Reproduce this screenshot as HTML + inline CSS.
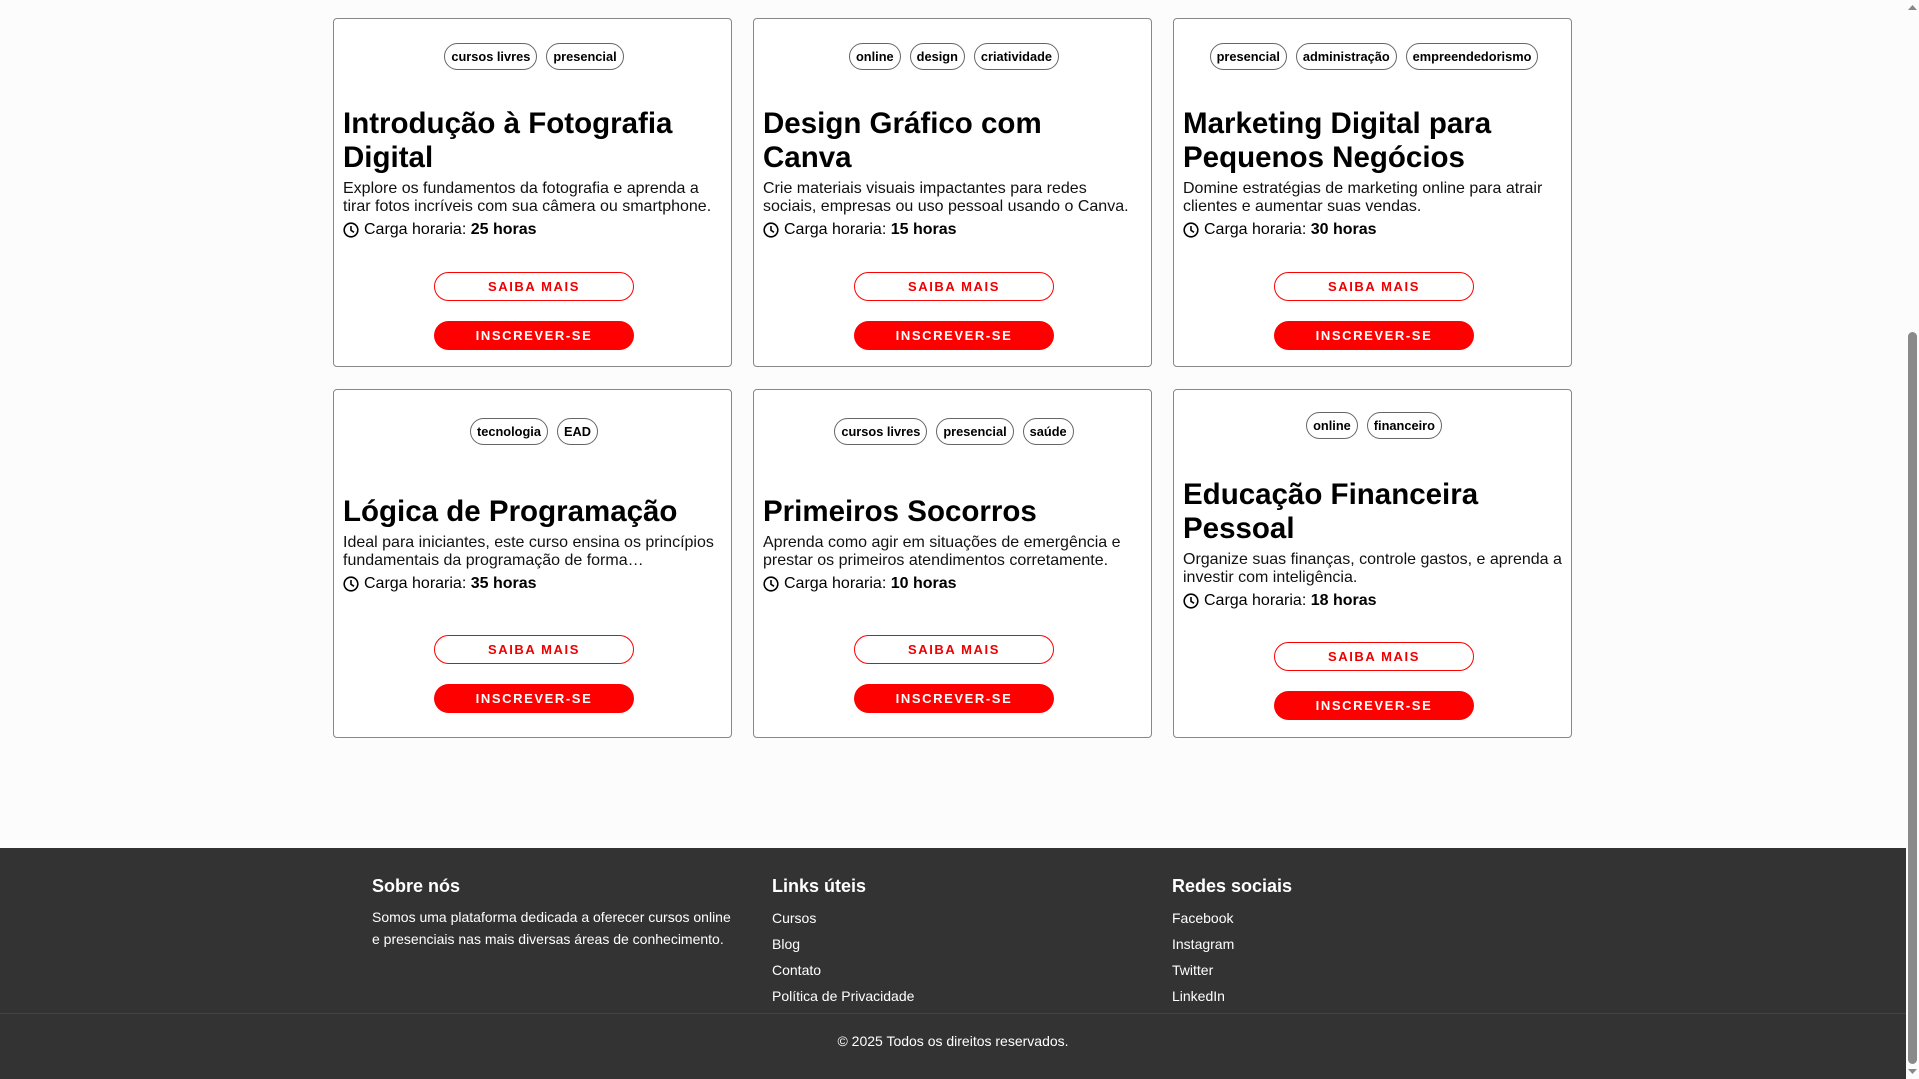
<!DOCTYPE html>
<html><head><meta charset="utf-8"><style>
*{box-sizing:border-box;margin:0;padding:0}
html,body{width:1919px;height:1079px;overflow:hidden;background:#fcfcfc;font-family:"Liberation Sans",Arial,sans-serif;color:#000}
.grid{position:absolute;left:333px;top:18px;width:1240px;display:grid;grid-template-columns:repeat(3,399px);column-gap:21px;row-gap:22px}
.card{height:349px;border:1px solid #888;border-radius:4px;background:#fff;padding:0 6px 0 9px;display:flex;flex-direction:column}
.tags{display:flex;justify-content:center;gap:9px;height:27px}
.tag{border:1px solid #666;border-radius:14px;height:27px;line-height:25px;padding:0 6px;font-size:12.8px;font-weight:bold}
h2{font-size:29.5px;line-height:34px;font-weight:700;white-space:nowrap}
.d{font-size:16px;line-height:18px;margin-top:5px;color:#111}
.c{font-size:16px;line-height:22px;margin-top:3px;display:flex;align-items:center}
.c svg{margin-right:5px}
.b{align-self:center;width:200px;height:29px;border-radius:15px;font-size:13px;font-weight:bold;letter-spacing:1.6px;text-align:center;line-height:27px}
.b1{border:1.5px solid #f00;color:#e00;background:#fff}
.b2{background:#f00;color:#fff;margin-top:20px;line-height:29px}
footer{position:absolute;left:0;top:848px;width:1906px;height:231px;background:#333;color:#fff}
.cols{position:absolute;left:372px;top:0;width:1200px;display:flex}
.col{width:400px}
.col h3{font-size:18px;font-weight:bold;position:absolute;top:28px}
.col p{font-size:14px;line-height:22px;position:absolute;top:58px;width:370px}
.col ul{list-style:none;position:absolute;top:57px}
.col li{font-size:14px;line-height:26px}
.line{position:absolute;top:165px;left:0;width:1906px;border-top:1px solid #444}
.copy{position:absolute;top:185px;width:1906px;text-align:center;font-size:14px}
.sb{position:absolute;right:0;top:0;width:13px;height:1079px;background:#fcfcfc}
.th{position:absolute;left:2px;top:332px;width:9px;height:732px;background:#8a8a8a;border-radius:5px}
</style></head><body>
<div class="grid">
<div class="card" style="padding-top:24px">
<div class="tags"><span class="tag">cursos livres</span><span class="tag">presencial</span></div>
<h2 style="margin-top:37px">Introdução à Fotografia<br>Digital</h2>
<div class="d">Explore os fundamentos da fotografia e aprenda a tirar fotos incríveis com sua câmera ou smartphone.</div>
<div class="c"><svg width="16" height="16" viewBox="0 0 16 16"><circle cx="8" cy="8" r="6.8" fill="none" stroke="#000" stroke-width="1.6"/><path d="M8 4v4.3l3 2" fill="none" stroke="#000" stroke-width="1.6"/></svg>Carga horaria:&nbsp;<b>25 horas</b></div>
<div class="b b1" style="margin-top:31px">SAIBA MAIS</div><div class="b b2">INSCREVER-SE</div>
</div>
<div class="card" style="padding-top:24px">
<div class="tags"><span class="tag">online</span><span class="tag">design</span><span class="tag">criatividade</span></div>
<h2 style="margin-top:37px">Design Gráfico com<br>Canva</h2>
<div class="d">Crie materiais visuais impactantes para redes<br>sociais, empresas ou uso pessoal usando o Canva.</div>
<div class="c"><svg width="16" height="16" viewBox="0 0 16 16"><circle cx="8" cy="8" r="6.8" fill="none" stroke="#000" stroke-width="1.6"/><path d="M8 4v4.3l3 2" fill="none" stroke="#000" stroke-width="1.6"/></svg>Carga horaria:&nbsp;<b>15 horas</b></div>
<div class="b b1" style="margin-top:31px">SAIBA MAIS</div><div class="b b2">INSCREVER-SE</div>
</div>
<div class="card" style="padding-top:24px">
<div class="tags"><span class="tag">presencial</span><span class="tag">administração</span><span class="tag">empreendedorismo</span></div>
<h2 style="margin-top:37px">Marketing Digital para<br>Pequenos Negócios</h2>
<div class="d">Domine estratégias de marketing online para atrair clientes e aumentar suas vendas.</div>
<div class="c"><svg width="16" height="16" viewBox="0 0 16 16"><circle cx="8" cy="8" r="6.8" fill="none" stroke="#000" stroke-width="1.6"/><path d="M8 4v4.3l3 2" fill="none" stroke="#000" stroke-width="1.6"/></svg>Carga horaria:&nbsp;<b>30 horas</b></div>
<div class="b b1" style="margin-top:31px">SAIBA MAIS</div><div class="b b2">INSCREVER-SE</div>
</div>
<div class="card" style="padding-top:28px">
<div class="tags"><span class="tag">tecnologia</span><span class="tag">EAD</span></div>
<h2 style="margin-top:50px">Lógica de Programação</h2>
<div class="d">Ideal para iniciantes, este curso ensina os princípios fundamentais da programação de forma…</div>
<div class="c"><svg width="16" height="16" viewBox="0 0 16 16"><circle cx="8" cy="8" r="6.8" fill="none" stroke="#000" stroke-width="1.6"/><path d="M8 4v4.3l3 2" fill="none" stroke="#000" stroke-width="1.6"/></svg>Carga horaria:&nbsp;<b>35 horas</b></div>
<div class="b b1" style="margin-top:40px">SAIBA MAIS</div><div class="b b2">INSCREVER-SE</div>
</div>
<div class="card" style="padding-top:28px">
<div class="tags"><span class="tag">cursos livres</span><span class="tag">presencial</span><span class="tag">saúde</span></div>
<h2 style="margin-top:50px">Primeiros Socorros</h2>
<div class="d">Aprenda como agir em situações de emergência e prestar os primeiros atendimentos corretamente.</div>
<div class="c"><svg width="16" height="16" viewBox="0 0 16 16"><circle cx="8" cy="8" r="6.8" fill="none" stroke="#000" stroke-width="1.6"/><path d="M8 4v4.3l3 2" fill="none" stroke="#000" stroke-width="1.6"/></svg>Carga horaria:&nbsp;<b>10 horas</b></div>
<div class="b b1" style="margin-top:40px">SAIBA MAIS</div><div class="b b2">INSCREVER-SE</div>
</div>
<div class="card" style="padding-top:22px">
<div class="tags"><span class="tag">online</span><span class="tag">financeiro</span></div>
<h2 style="margin-top:39px">Educação Financeira<br>Pessoal</h2>
<div class="d">Organize suas finanças, controle gastos, e aprenda a<br>investir com inteligência.</div>
<div class="c"><svg width="16" height="16" viewBox="0 0 16 16"><circle cx="8" cy="8" r="6.8" fill="none" stroke="#000" stroke-width="1.6"/><path d="M8 4v4.3l3 2" fill="none" stroke="#000" stroke-width="1.6"/></svg>Carga horaria:&nbsp;<b>18 horas</b></div>
<div class="b b1" style="margin-top:30px">SAIBA MAIS</div><div class="b b2">INSCREVER-SE</div>
</div>
</div>
<footer>
<div class="cols">
<div class="col" style="position:relative"><h3>Sobre nós</h3><p>Somos uma plataforma dedicada a oferecer cursos online e presenciais nas mais diversas áreas de conhecimento.</p></div>
<div class="col" style="position:relative"><h3>Links úteis</h3><ul><li>Cursos</li><li>Blog</li><li>Contato</li><li>Política de Privacidade</li></ul></div>
<div class="col" style="position:relative"><h3>Redes sociais</h3><ul><li>Facebook</li><li>Instagram</li><li>Twitter</li><li>LinkedIn</li></ul></div>
</div>
<div class="line"></div>
<div class="copy">© 2025 Todos os direitos reservados.</div>
</footer>
<div class="sb"><svg style="position:absolute;left:1px;top:3px" width="11" height="8"><path d="M1 7L5.5 2 10 7z" fill="#888"/></svg><div class="th"></div><svg style="position:absolute;left:1px;top:1068px" width="11" height="8"><path d="M1 1L5.5 6 10 1z" fill="#888"/></svg></div>
</body></html>
